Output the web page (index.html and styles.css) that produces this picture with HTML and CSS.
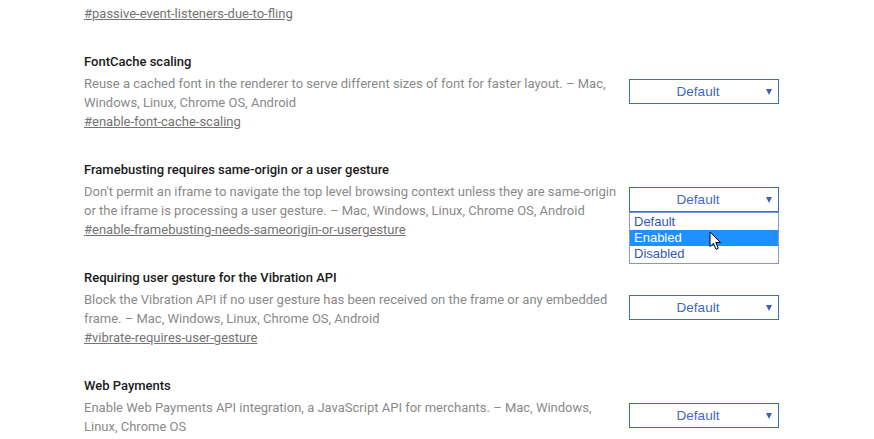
FILE: index.html
```html
<!DOCTYPE html>
<html>
<head>
<meta charset="utf-8">
<link rel="stylesheet" href="styles.css">
</head>
<body>
<div class="page">
  <div class="lead-link"><a class="link" href="#">#passive-event-listeners-due-to-fling</a></div>

  <div class="experiment">
    <div class="text">
      <div class="title">FontCache scaling</div>
      <div class="desc">Reuse a cached font in the renderer to serve different sizes of font for faster layout. – Mac, Windows, Linux, Chrome OS, Android</div>
      <a class="link" href="#">#enable-font-cache-scaling</a>
    </div>
    <div class="actions">
      <div class="select"><span class="value">Default</span><span class="arrow"></span></div>
    </div>
  </div>

  <div class="experiment">
    <div class="text">
      <div class="title">Framebusting requires same-origin or a user gesture</div>
      <div class="desc">Don't permit an iframe to navigate the top level browsing context unless they are same-origin or the iframe is processing a user gesture. – Mac, Windows, Linux, Chrome OS, Android</div>
      <a class="link" href="#">#enable-framebusting-needs-sameorigin-or-usergesture</a>
    </div>
    <div class="actions">
      <div class="select open"><span class="value">Default</span><span class="arrow"></span>
        <div class="menu">
          <div class="option">Default</div>
          <div class="option active">Enabled</div>
          <div class="option">Disabled</div>
          <svg class="cursor" width="13" height="20" viewBox="0 0 13 20"><path d="M1 1 L1 15.5 L4.5 12.3 L7 18.3 L9.3 17.3 L6.8 11.5 L11.5 11.5 Z" fill="#fff" stroke="#000" stroke-width="1" stroke-linejoin="miter"/></svg>
        </div>
      </div>
    </div>
  </div>

  <div class="experiment">
    <div class="text">
      <div class="title">Requiring user gesture for the Vibration API</div>
      <div class="desc">Block the Vibration API if no user gesture has been received on the frame or any embedded frame. – Mac, Windows, Linux, Chrome OS, Android</div>
      <a class="link" href="#">#vibrate-requires-user-gesture</a>
    </div>
    <div class="actions">
      <div class="select"><span class="value">Default</span><span class="arrow"></span></div>
    </div>
  </div>

  <div class="experiment">
    <div class="text">
      <div class="title">Web Payments</div>
      <div class="desc">Enable Web Payments API integration, a JavaScript API for merchants. – Mac, Windows, Linux, Chrome OS</div>
      <a class="link" href="#">#enable-web-payments</a>
    </div>
    <div class="actions">
      <div class="select"><span class="value">Default</span><span class="arrow"></span></div>
    </div>
  </div>
</div>
</body>
</html>
```
FILE: styles.css
```css
html, body {
  margin: 0;
  padding: 0;
  background: #fff;
}
body {
  font-family: Roboto, "Liberation Sans", Arial, sans-serif;
  font-size: 13px;
  overflow: hidden;
  height: 439px;
}
.page {
  padding: 4px 0 0 84px;
  display: flex;
  flex-direction: column;
  gap: 29px;
}
.lead-link {
  line-height: 19px;
}
.link {
  color: #737373;
  text-decoration: underline;
  line-height: 19px;
  display: inline-block;
}
.experiment {
  display: flex;
  align-items: center;
  gap: 7px;
}
.text {
  width: 538px;
  display: flex;
  flex-direction: column;
  align-items: flex-start;
}
.title {
  color: #1a1a1a;
  font-weight: 500;
  line-height: 20px;
  margin-bottom: 2px;
}
.desc {
  color: #8a8a8a;
  line-height: 19px;
}
.actions {
  flex: none;
}
.select {
  position: relative;
  box-sizing: border-box;
  width: 150px;
  height: 25px;
  border: 1px solid #3b6ccb;
  background: #fff;
  display: flex;
  align-items: center;
  justify-content: center;
  padding-right: 12px;
  font-family: "Liberation Sans", Arial, sans-serif;
  font-size: 13.5px;
  color: #4366cc;
}
.arrow {
  position: absolute;
  right: 6px;
  top: 9px;
  width: 0;
  height: 0;
  border-left: 3.5px solid transparent;
  border-right: 3.5px solid transparent;
  border-top: 6px solid #3a5fbf;
}
.menu {
  position: absolute;
  left: -1px;
  top: 24px;
  width: 150px;
  box-sizing: border-box;
  border: 1px solid #7f9bc9;
  background: #fff;
  padding: 1px 0 1px;
  font-family: "Liberation Sans", Arial, sans-serif;
  font-size: 13px;
  color: #3556b3;
  z-index: 5;
}
.option {
  height: 16px;
  line-height: 16px;
  padding-left: 4px;
}
.option.active {
  background: #1e90ff;
  color: #fff;
}
.cursor {
  position: absolute;
  left: 79px;
  top: 18px;
}
```
